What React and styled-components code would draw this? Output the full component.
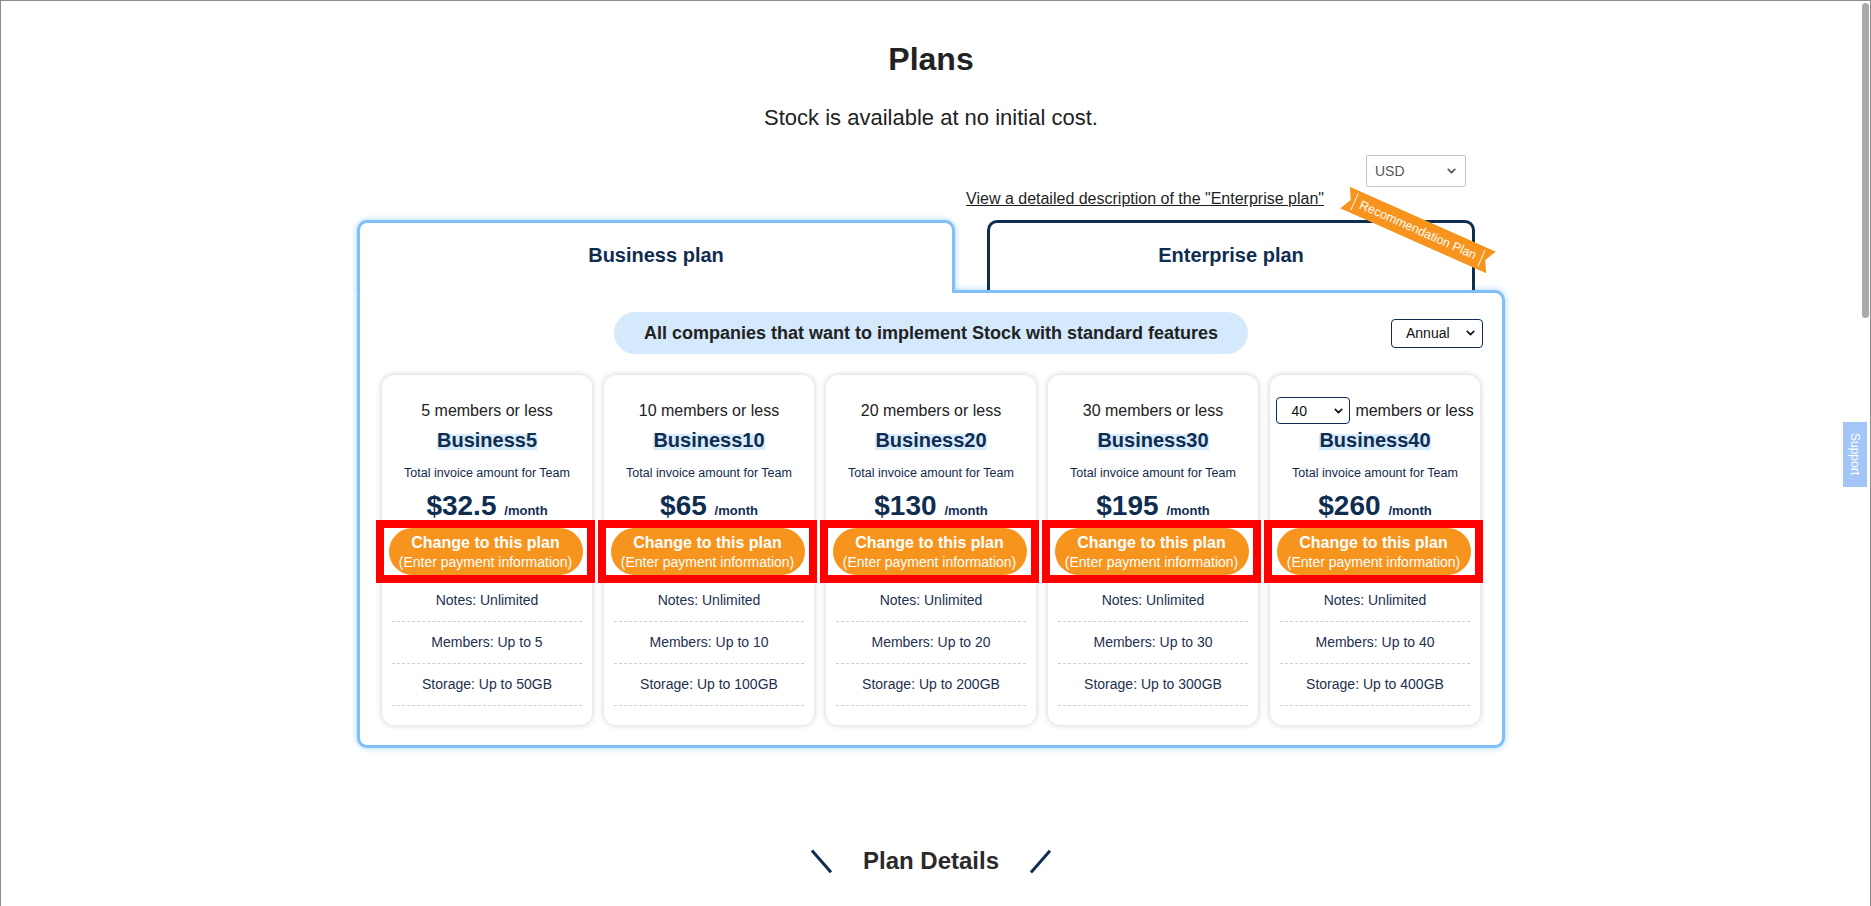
import React from "react";
import styled, { createGlobalStyle } from "styled-components";
import { ChevronDown } from "lucide-react";

const NAVY = "#0f2d50";
const SKY = "#80c0f8";
const ORANGE = "#f7941d";

const plans = [
  { members: 5, price: "$32.5", storage: "50GB" },
  { members: 10, price: "$65", storage: "100GB" },
  { members: 20, price: "$130", storage: "200GB" },
  { members: 30, price: "$195", storage: "300GB" },
  { members: 40, price: "$260", storage: "400GB", pick: true },
];

function Select({ value, options, w, h, pad, border, radius, color, chevron, right }) {
  return (
    <SelectWrap $w={w} $h={h}>
      <NativeSelect
        defaultValue={value}
        $pad={pad}
        $border={border}
        $radius={radius}
        $color={color}
      >
        {options.map((o) => (
          <option key={o}>{o}</option>
        ))}
      </NativeSelect>
      <Chevron size={13} strokeWidth={3} $right={right} $color={chevron} />
    </SelectWrap>
  );
}

function PlanCard({ plan }) {
  return (
    <Card>
      <Members>
        {plan.pick && (
          <Select
            value="40"
            options={["40", "50", "60", "80", "100"]}
            w={74}
            h={27}
            pad={14}
            border={NAVY}
            radius={4}
            color="#111"
            chevron="#111"
            right={5}
          />
        )}
        {plan.pick ? "members or less" : `${plan.members} members or less`}
      </Members>
      <PlanName>
        <Marker>Business{plan.members}</Marker>
      </PlanName>
      <InvoiceNote>Total invoice amount for Team</InvoiceNote>
      <Price>
        {plan.price} <small>/month</small>
      </Price>
      <ButtonFrame>
        <ChangeButton type="button">
          <strong>Change to this plan</strong>
          <span>(Enter payment information)</span>
        </ChangeButton>
      </ButtonFrame>
      <Feature>Notes: Unlimited</Feature>
      <Feature>Members: Up to {plan.members}</Feature>
      <Feature>Storage: Up to {plan.storage}</Feature>
    </Card>
  );
}

export default function App() {
  return (
    <Page>
      <GlobalStyle />
      <Container>
        <Title>Plans</Title>
        <Lead>Stock is available at no initial cost.</Lead>

        <CurrencyRow>
          <Select
            value="USD"
            options={["USD", "JPY", "EUR"]}
            w={100}
            h={32}
            pad={8}
            border="#c4c4c4"
            radius={2}
            color="#555"
            chevron="#555"
            right={8}
          />
        </CurrencyRow>
        <LinkRow>
          <DetailLink href="#">
            View a detailed description of the "Enterprise plan"
          </DetailLink>
        </LinkRow>

        <TabRow>
          <Tab $active $w={598}>
            Business plan
          </Tab>
          <Tab $w={488} $gap={32}>
            Enterprise plan
            <Ribbon>Recommendation Plan</Ribbon>
          </Tab>
        </TabRow>

        <Panel>
          <PanelHead>
            <Pill>All companies that want to implement Stock with standard features</Pill>
            <BillingSlot>
              <Select
                value="Annual"
                options={["Annual", "Monthly"]}
                w={92}
                h={29}
                pad={14}
                border={NAVY}
                radius={4}
                color="#111"
                chevron="#111"
                right={6}
              />
            </BillingSlot>
          </PanelHead>
          <CardGrid>
            {plans.map((p) => (
              <PlanCard key={p.members} plan={p} />
            ))}
          </CardGrid>
        </Panel>

        <SectionHead>
          <Slash $deg={-41} />
          <h2>Plan Details</h2>
          <Slash $deg={41} />
        </SectionHead>
      </Container>

      <SupportTab>Support</SupportTab>
      <ScrollThumb />
    </Page>
  );
}

const GlobalStyle = createGlobalStyle`
  html, body {
    margin: 0;
    padding: 0;
    background: #fff;
    overflow: hidden;
  }
  body {
    font-family: "Liberation Sans", Arial, sans-serif;
    color: #222;
  }
  * {
    box-sizing: border-box;
  }
`;

const Page = styled.div`
  min-height: 100vh;
  border: 1px solid #8c8c8c;
  border-bottom: none;
  padding-right: 9px;
`;

const Container = styled.main`
  width: 1148px;
  margin: 0 auto;
`;

const Title = styled.h1`
  margin: 40px 0 0;
  font-size: 32px;
  line-height: 37px;
  font-weight: 700;
  text-align: center;
  color: #222;
`;

const Lead = styled.p`
  margin: 27px 0 0;
  font-size: 22px;
  line-height: 25px;
  text-align: center;
  color: #222;
`;

const CurrencyRow = styled.div`
  display: flex;
  justify-content: flex-end;
  margin-top: 25px;
  padding-right: 39px;
`;

const LinkRow = styled.div`
  display: flex;
  justify-content: flex-end;
  margin-top: 3px;
  padding-right: 181px;
`;

const DetailLink = styled.a`
  font-size: 16px;
  line-height: 18px;
  color: #1f1f1f;
  text-decoration: underline;
`;

const SelectWrap = styled.span`
  position: relative;
  display: inline-flex;
  flex: none;
  width: ${(p) => p.$w}px;
  height: ${(p) => p.$h}px;
`;

const NativeSelect = styled.select`
  appearance: none;
  width: 100%;
  height: 100%;
  margin: 0;
  padding: 0 0 0 ${(p) => p.$pad}px;
  border: 1px solid ${(p) => p.$border};
  border-radius: ${(p) => p.$radius}px;
  background: #fff;
  color: ${(p) => p.$color};
  font: 14px "Liberation Sans", Arial, sans-serif;
  outline: none;
`;

const Chevron = styled(ChevronDown)`
  position: absolute;
  top: 50%;
  right: ${(p) => p.$right}px;
  transform: translateY(-50%);
  color: ${(p) => p.$color};
  pointer-events: none;
`;

const TabRow = styled.div`
  display: flex;
  align-items: flex-end;
  margin-top: 12px;
`;

const Tab = styled.div`
  position: relative;
  z-index: ${(p) => (p.$active ? 2 : 1)};
  width: ${(p) => p.$w}px;
  height: ${(p) => (p.$active ? 73 : 70)}px;
  margin-left: ${(p) => p.$gap || 0}px;
  margin-bottom: ${(p) => (p.$active ? -3 : 0)}px;
  padding-top: 21px;
  border: 3px solid ${(p) => (p.$active ? SKY : NAVY)};
  border-bottom: none;
  border-radius: 10px 10px 0 0;
  background: #fff;
  box-shadow: ${(p) => (p.$active ? "0 0 6px rgba(128, 192, 248, 0.7)" : "none")};
  clip-path: ${(p) => (p.$active ? "inset(-10px -10px 0 -10px)" : "none")};
  text-align: center;
  font-size: 20px;
  line-height: 23px;
  font-weight: 700;
  color: ${NAVY};
`;

const Ribbon = styled.div`
  position: absolute;
  left: 348px;
  top: -5px;
  width: 160px;
  height: 24px;
  background: ${ORANGE};
  color: #fff;
  font-size: 12.5px;
  font-weight: 400;
  line-height: 24px;
  text-align: center;
  transform: rotate(24deg);
  clip-path: polygon(0 0, 100% 0, 96% 50%, 100% 100%, 0 100%, 4% 50%);

  &::before,
  &::after {
    content: "";
    position: absolute;
    top: 3px;
    bottom: 3px;
    width: 1px;
    background: rgba(255, 255, 255, 0.85);
  }
  &::before {
    left: 10px;
  }
  &::after {
    right: 10px;
  }
`;

const Panel = styled.section`
  border: 3px solid ${SKY};
  border-radius: 0 10px 10px 10px;
  padding: 19px 22px 20px;
  box-shadow: 0 0 6px rgba(128, 192, 248, 0.7);
  background: #fff;
`;

const PanelHead = styled.div`
  display: grid;
  grid-template-columns: 1fr auto 1fr;
  align-items: center;
`;

const Pill = styled.div`
  grid-column: 2;
  height: 42px;
  padding: 0 30px;
  border-radius: 21px;
  background: #d4e9fc;
  font-size: 18px;
  line-height: 42px;
  font-weight: 700;
  color: #222;
  white-space: nowrap;
`;

const BillingSlot = styled.div`
  grid-column: 3;
  justify-self: end;
  margin-right: -3px;
  display: flex;
`;

const CardGrid = styled.div`
  display: grid;
  grid-template-columns: repeat(5, 210px);
  gap: 12px;
  margin-top: 21px;
`;

const Card = styled.article`
  height: 350px;
  padding: 26px 10px 19px;
  border-radius: 12px;
  background: #fff;
  box-shadow: 0 0 6px rgba(0, 0, 0, 0.2);
  text-align: center;
`;

const Members = styled.div`
  display: flex;
  justify-content: center;
  align-items: center;
  gap: 5px;
  height: 19px;
  margin: 0 -8px;
  white-space: nowrap;
  font-size: 16px;
  color: #222;
`;

const PlanName = styled.div`
  margin-top: 9px;
  font-size: 20px;
  line-height: 23px;
  font-weight: 700;
  color: ${NAVY};
`;

const Marker = styled.span`
  background: linear-gradient(transparent 22%, #d9ecfc 22%, #d9ecfc 94%, transparent 94%);
`;

const InvoiceNote = styled.div`
  margin-top: 14px;
  font-size: 12.5px;
  line-height: 14px;
  color: #14294a;
`;

const Price = styled.div`
  height: 32px;
  margin-top: 10px;
  font-size: 28px;
  line-height: 32px;
  font-weight: 700;
  color: ${NAVY};

  small {
    font-size: 13px;
    line-height: 1;
    font-weight: 700;
  }
`;

const ButtonFrame = styled.div`
  width: 203px;
  height: 47px;
  margin: 6px 0 5px -8px;
  outline: 8px solid #fe0000;
  background: #fff;
  display: flex;
  justify-content: center;
`;

const ChangeButton = styled.button`
  display: flex;
  flex-direction: column;
  align-items: center;
  width: 194px;
  height: 47px;
  padding: 5px 0 0;
  border: none;
  border-radius: 24px;
  background: ${ORANGE};
  color: #fff;
  font-family: "Liberation Sans", Arial, sans-serif;
  cursor: pointer;

  strong {
    font-size: 16px;
    line-height: 19px;
    font-weight: 700;
  }
  span {
    font-size: 14px;
    line-height: 20px;
    white-space: nowrap;
  }
`;

const Feature = styled.div`
  padding: 12px 0 13px;
  border-bottom: 1px dashed #cfcfcf;
  font-size: 14px;
  line-height: 16px;
  color: #1e3050;
`;

const SectionHead = styled.div`
  display: flex;
  justify-content: center;
  align-items: center;
  gap: 40px;
  height: 28px;
  margin-top: 99px;

  h2 {
    margin: 0;
    font-size: 24px;
    line-height: 28px;
    font-weight: 700;
    color: #2a2a2a;
  }
`;

const Slash = styled.span`
  width: 2.5px;
  height: 29px;
  background: ${NAVY};
  transform: rotate(${(p) => p.$deg}deg);
`;

const SupportTab = styled.div`
  position: fixed;
  top: 422px;
  right: 4px;
  width: 24px;
  height: 65px;
  display: flex;
  align-items: center;
  justify-content: center;
  background: #a3c6f7;
  color: #fff;
  font-size: 12px;
  writing-mode: vertical-rl;
`;

const ScrollThumb = styled.div`
  position: fixed;
  top: 3px;
  right: 2px;
  width: 7px;
  height: 315px;
  border-radius: 4px;
  background: #a9a9a9;
`;
